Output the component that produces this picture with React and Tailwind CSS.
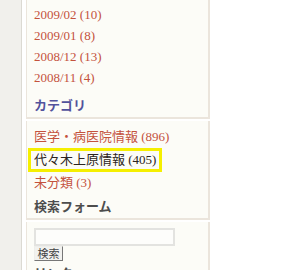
import React from "react";

const archives = ["2009/02 (10)", "2009/01 (8)", "2008/12 (13)", "2008/11 (4)"];

const App = () => {
  return (
    <div
      className="flex h-[270px] w-[300px] overflow-hidden bg-white"
      style={{ fontFamily: '"Liberation Serif", "Noto Sans CJK JP", serif' }}
    >
      {/* left gutter */}
      <div className="w-[22px] shrink-0 bg-[#f1f0ec] border-r border-[#dcdad3]" />

      {/* sidebar */}
      <div className="w-[188px] shrink-0 pl-[4px] flex flex-col gap-[2px] bg-white">
        {/* archives box */}
        <div className="bg-[#fcfcf7] border-l border-r-2 border-b-2 border-[#ebe5dc] pl-[7px] pt-[4px]">
          <ul className="text-[13px] leading-[21px] text-[#c4523d]">
            {archives.map((a) => (
              <li key={a}>{a}</li>
            ))}
          </ul>
          <h2 className="mt-[6px] text-[13px] leading-[23px] font-semibold text-[#52529c]">カテゴリ</h2>
        </div>

        {/* categories box */}
        <div className="bg-[#fcfcf7] border-l border-r-2 border-b-2 border-[#ebe5dc] pl-[7px] pt-[4px]">
          <ul className="text-[13px] text-[#c4523d]">
            <li className="leading-[23px]">医学・病医院情報 (896)</li>
            <li className="leading-[18px]">
              <span className="inline-block -ml-[6px] px-[3px] border-[3px] border-[#f5ef00] text-[#2b2420]">
                代々木上原情報 (405)
              </span>
            </li>
            <li className="leading-[22px]">未分類 (3)</li>
          </ul>
          <h2 className="mt-[1px] text-[13px] leading-[23px] font-semibold text-[#4d4d4d]">検索フォーム</h2>
        </div>

        {/* search box */}
        <div className="flex-1 bg-[#fcfcf7] border-l border-r-2 border-[#ebe5dc] pl-[7px] pt-[6px]">
          <div className="w-[141px] h-[18px] border-2 border-[#e3e3e0] bg-[#fdfdfb]" />
          <button className="block w-[29px] h-[15px] text-[11px] leading-[12px] text-[#444] bg-[#f2f2ef] border border-t-[#eeeeea] border-l-[#eeeeea] border-b-[#777] border-r-[#777]">
            検索
          </button>
          <h2 className="mt-[2px] text-[13px] leading-[22px] font-semibold text-[#4d4d4d]">リンク</h2>
        </div>
      </div>
    </div>
  );
};

export default App;
